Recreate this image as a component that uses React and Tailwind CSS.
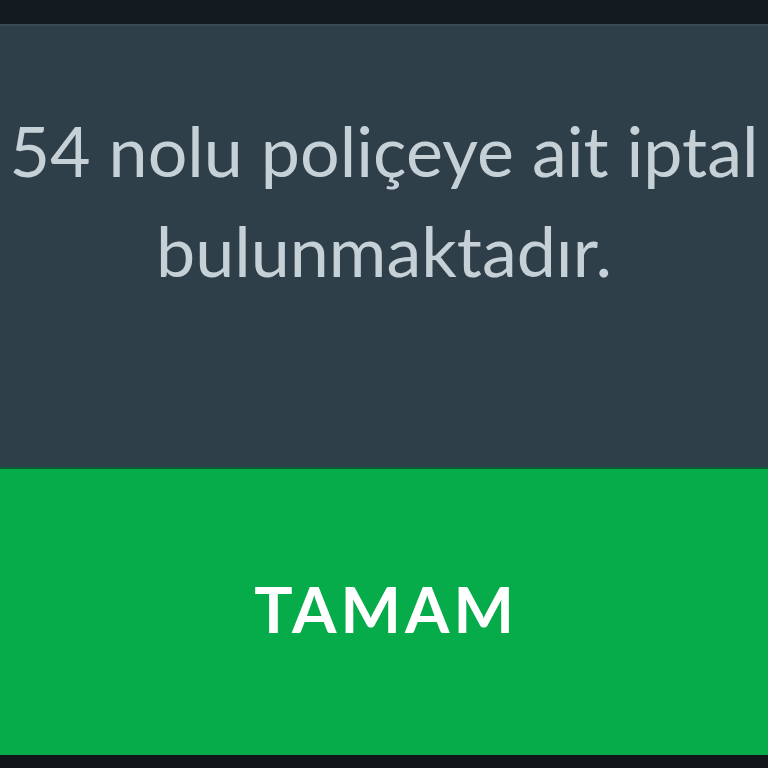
import React from 'react';

const App = () => {
    return (
        <div className="flex flex-col w-full h-[768px] overflow-hidden bg-[#11181c]" style={{ fontFamily: 'Lato, "Noto Sans", sans-serif' }}>
            <div className="h-[24px] bg-[#121a1f]"></div>
            <div className="h-[443px] bg-[#2f3f49] border-t-2 border-[#3a4a54] flex flex-col items-center pt-[74px] overflow-hidden">
                <p className="text-[70px] leading-[100px] text-[#c6d1d7] text-center whitespace-nowrap">
                    54 nolu poliçeye ait iptal
                </p>
                <p className="text-[70px] leading-[100px] text-[#c6d1d7] text-center whitespace-nowrap">
                    bulunmaktadır.
                </p>
            </div>
            <div className="h-[288px] bg-[#06ac4a] border-t-2 border-[#0b5e34] flex items-center justify-center pb-[6px]">
                <button className="text-white text-[64px] font-bold tracking-[4px] pl-[4px]">TAMAM</button>
            </div>
            <div className="flex-1 bg-[#121619]"></div>
        </div>
    );
};

export default App;
